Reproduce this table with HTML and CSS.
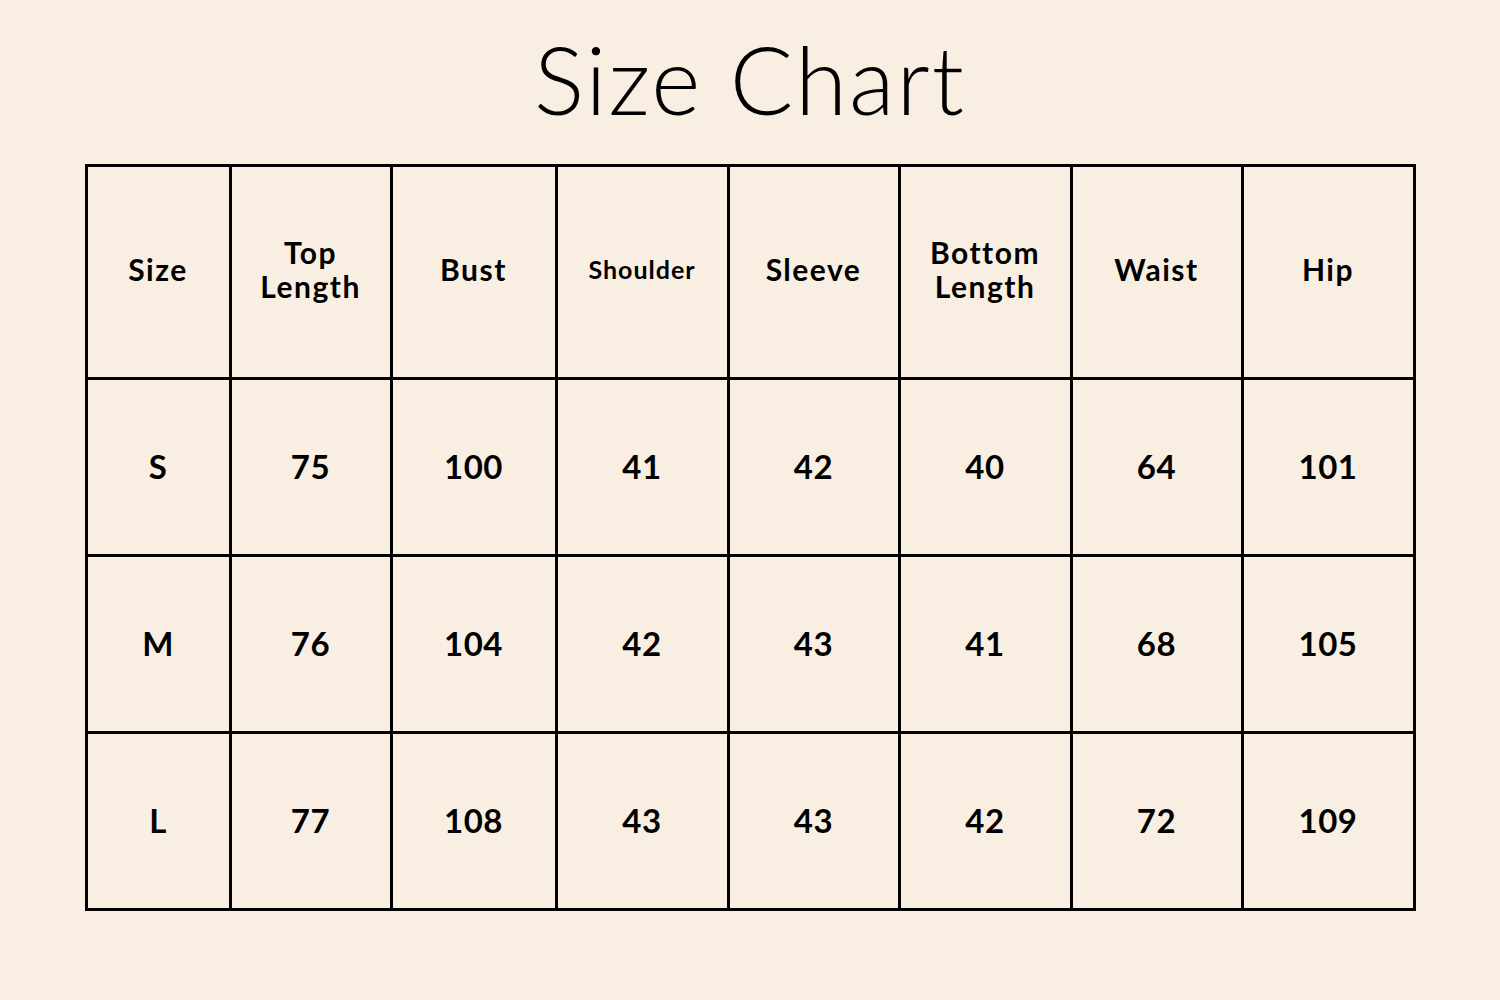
FILE: index.html
```html
<!DOCTYPE html>
<html lang="en">
<head>
<meta charset="utf-8">
<title>Size Chart</title>
<link rel="stylesheet" href="styles.css">
</head>
<body>
<main class="page">
  <h1 class="title">Size Chart</h1>
  <table class="chart">
    <colgroup>
      <col class="c1"><col class="c2"><col class="c3"><col class="c4"><col class="c5"><col class="c6"><col class="c7"><col class="c8">
    </colgroup>
    <thead>
      <tr class="head">
        <th>Size</th>
        <th>Top<br>Length</th>
        <th>Bust</th>
        <th class="small">Shoulder</th>
        <th>Sleeve</th>
        <th>Bottom<br>Length</th>
        <th>Waist</th>
        <th>Hip</th>
      </tr>
    </thead>
    <tbody>
      <tr><td>S</td><td>75</td><td>100</td><td>41</td><td>42</td><td>40</td><td>64</td><td>101</td></tr>
      <tr><td>M</td><td>76</td><td>104</td><td>42</td><td>43</td><td>41</td><td>68</td><td>105</td></tr>
      <tr><td>L</td><td>77</td><td>108</td><td>43</td><td>43</td><td>42</td><td>72</td><td>109</td></tr>
    </tbody>
  </table>
</main>
</body>
</html>
```
FILE: styles.css
```css
html, body {
  margin: 0;
  padding: 0;
  background: #f8efe2;
}
body {
  width: 1500px;
  height: 1000px;
  font-family: Lato, "Noto Sans", sans-serif;
  color: #000;
}
.page {
  display: flex;
  flex-direction: column;
  align-items: center;
  padding-top: 24px;
}
.title {
  margin: 0;
  font-weight: 300;
  font-size: 94px;
  line-height: 110px;
  letter-spacing: 2px;
  height: 140px;
}
.chart {
  border-collapse: collapse;
  table-layout: fixed;
  width: 1330px;
}
.c1 { width: 144px; }
.c2 { width: 161px; }
.c3 { width: 165px; }
.c4 { width: 172px; }
.c5 { width: 171px; }
.c6 { width: 172px; }
.c7 { width: 171px; }
.c8 { width: 172px; }
.chart th, .chart td {
  border: 3px solid #000;
  text-align: center;
  vertical-align: middle;
  font-weight: 700;
}
.chart th {
  height: 204px;
  padding: 0 0 6px;
  font-size: 30px;
  line-height: 34px;
  letter-spacing: 1.5px;
}
.chart th.small {
  font-size: 25px;
  letter-spacing: 1px;
}
.chart td {
  height: 171px;
  padding: 0 0 3px;
  font-size: 33px;
  letter-spacing: 0.5px;
}
```
